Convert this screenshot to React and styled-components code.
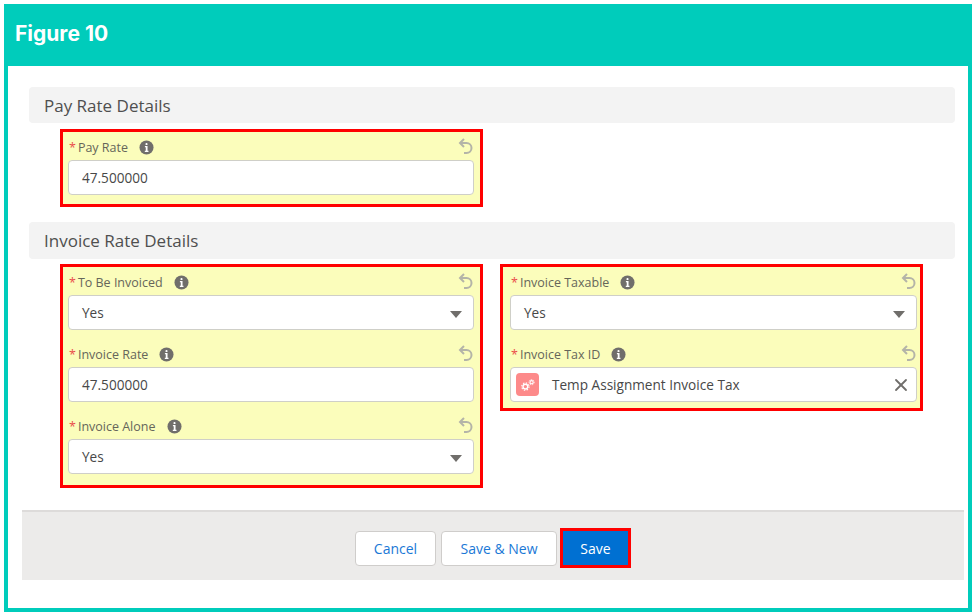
import React from 'react';
import styled, { createGlobalStyle } from 'styled-components';
import { X } from 'lucide-react';

const GlobalStyle = createGlobalStyle`
  html, body {
    margin: 0;
    padding: 0;
    background: #fff;
  }
  * {
    box-sizing: border-box;
  }
`;

function InfoIcon() {
  return (
    <InfoSvg viewBox="0 0 16 16">
      <circle cx="8" cy="8" r="7.5" fill="#706e6b" />
      <rect x="6.9" y="3.2" width="2.2" height="2.2" rx="1" fill="#fff" />
      <path d="M6.3 6.5h2.8v5h1v1.2H6.2v-1.2h1v-3.8h-.9z" fill="#fff" />
    </InfoSvg>
  );
}

function UndoIcon() {
  return (
    <svg width="16" height="16" viewBox="0 0 16 16" fill="none" stroke="currentColor" strokeWidth="2">
      <path d="M6 1L2 5l4 4" />
      <path d="M2 5h6.5a5 5 0 0 1 0 10H6" />
    </svg>
  );
}

function GearsIcon() {
  return (
    <svg width="14" height="12" viewBox="0 0 14 12">
      <circle cx="4.4" cy="7.6" r="2.4" fill="none" stroke="#fff" strokeWidth="1.4" />
      <circle cx="4.4" cy="7.6" r="3.7" fill="none" stroke="#fff" strokeWidth="1.1" strokeDasharray="1.5 1.4" />
      <circle cx="10.6" cy="3.2" r="1.6" fill="none" stroke="#fff" strokeWidth="1.1" />
      <circle cx="10.6" cy="3.2" r="2.6" fill="none" stroke="#fff" strokeWidth="0.9" strokeDasharray="1.2 1" />
    </svg>
  );
}

function Field({ label, children }) {
  return (
    <div>
      <LabelRow>
        <Required>*</Required>
        <LabelText>{label}</LabelText>
        <InfoIcon />
        <UndoButton>
          <UndoIcon />
        </UndoButton>
      </LabelRow>
      {children}
    </div>
  );
}

function Picklist({ value }) {
  return (
    <InputBox>
      {value}
      <Caret />
    </InputBox>
  );
}

export default function App() {
  return (
    <Frame>
      <GlobalStyle />
      <Header>Figure 10</Header>
      <Content>
        <SectionHead>Pay Rate Details</SectionHead>
        <FieldGrid>
          <RedBox $bottom={9}>
            <Field label="Pay Rate">
              <InputBox>47.500000</InputBox>
            </Field>
          </RedBox>
        </FieldGrid>

        <SectionHead $second>Invoice Rate Details</SectionHead>
        <FieldGrid>
          <RedBox $bottom={11}>
            <FieldStack>
              <Field label="To Be Invoiced">
                <Picklist value="Yes" />
              </Field>
              <Field label="Invoice Rate">
                <InputBox>47.500000</InputBox>
              </Field>
              <Field label="Invoice Alone">
                <Picklist value="Yes" />
              </Field>
            </FieldStack>
          </RedBox>
          <RedBox $bottom={6} $right>
            <FieldStack>
              <Field label="Invoice Taxable">
                <Picklist value="Yes" />
              </Field>
              <Field label="Invoice Tax ID">
                <InputBox $lookup>
                  <LookupIcon>
                    <GearsIcon />
                  </LookupIcon>
                  <LookupText>Temp Assignment Invoice Tax</LookupText>
                  <ClearButton>
                    <X size={20} strokeWidth={2.2} />
                  </ClearButton>
                </InputBox>
              </Field>
            </FieldStack>
          </RedBox>
        </FieldGrid>
      </Content>

      <Footer>
        <Button>Cancel</Button>
        <Button $wide>Save &amp; New</Button>
        <SaveOutline>
          <SaveButton>Save</SaveButton>
        </SaveOutline>
      </Footer>
    </Frame>
  );
}

const Frame = styled.div`
  width: 968px;
  height: 608px;
  margin: 4px;
  border: 4px solid #00ccbb;
  background: #fff;
  font-family: 'Open Sans', 'Noto Sans', sans-serif;
`;

const Header = styled.div`
  display: flex;
  align-items: center;
  height: 58px;
  padding: 0 0 8px 7px;
  background: #00ccbb;
  color: #fff;
  font-family: 'Inter', sans-serif;
  font-size: 21px;
  font-weight: 700;
`;

const Content = styled.div`
  padding: 21px 13px 0 21px;
`;

const SectionHead = styled.div`
  display: flex;
  align-items: center;
  height: ${props => (props.$second ? '37px' : '36px')};
  margin-top: ${props => (props.$second ? '15px' : '0')};
  margin-bottom: ${props => (props.$second ? '5px' : '6px')};
  padding-left: 15px;
  background: #f3f3f3;
  border-radius: 4px;
  color: #4f4f4f;
  font-size: 17px;
`;

const FieldGrid = styled.div`
  display: grid;
  grid-template-columns: 423px 423px;
  column-gap: 17px;
  align-items: start;
  padding-left: 31px;
`;

const RedBox = styled.div`
  padding: 0 ${props => (props.$right ? '3px' : '6px')} ${props => props.$bottom}px
    ${props => (props.$right ? '7px' : '5px')};
  background: #fbfdbb;
  border: 3px solid #ff0000;
`;

const FieldStack = styled.div`
  display: flex;
  flex-direction: column;
  gap: 9px;
`;

const LabelRow = styled.div`
  position: relative;
  display: flex;
  align-items: center;
  height: 28px;
  padding: 3px 0 0 1px;
  color: #66665a;
  font-size: 12.5px;
`;

const Required = styled.span`
  margin-right: 2px;
  color: #ea4a4a;
`;

const LabelText = styled.span`
  margin-right: 11px;
`;

const InfoSvg = styled.svg`
  width: 15px;
  height: 15px;
`;

const UndoButton = styled.span`
  position: absolute;
  top: 6px;
  right: 0;
  display: flex;
  color: #b4b4a8;
`;

const InputBox = styled.div`
  position: relative;
  display: flex;
  align-items: center;
  height: 35px;
  padding-left: ${props => (props.$lookup ? '5px' : '13px')};
  background: #fff;
  border: 1px solid #cfcfc8;
  border-radius: 4px;
  color: #484848;
  font-size: 13.6px;
`;

const Caret = styled.span`
  position: absolute;
  top: 15px;
  right: 11px;
  width: 0;
  height: 0;
  border-left: 6px solid transparent;
  border-right: 6px solid transparent;
  border-top: 7px solid #706e6b;
`;

const LookupIcon = styled.span`
  display: flex;
  align-items: center;
  justify-content: center;
  width: 23px;
  height: 23px;
  background: #fd8a8a;
  border-radius: 4px;
`;

const LookupText = styled.span`
  margin-left: 13px;
`;

const ClearButton = styled.span`
  position: absolute;
  top: 7px;
  right: 5px;
  display: flex;
  color: #706e6b;
`;

const Footer = styled.div`
  display: flex;
  align-items: center;
  justify-content: center;
  gap: 5px;
  height: 70px;
  margin: 22px 4px 0 14px;
  padding-top: 4px;
  background: #ecebea;
  border-top: 2px solid #dddbda;
`;

const Button = styled.button`
  width: ${props => (props.$wide ? '116px' : '81px')};
  height: 35px;
  padding: 0;
  background: #fff;
  border: 1px solid #cfcdcb;
  border-radius: 4px;
  color: #1a78d6;
  font-family: inherit;
  font-size: 14px;
`;

const SaveOutline = styled.div`
  margin-left: -2px;
  border: 3px solid #ff0000;
`;

const SaveButton = styled.button`
  display: block;
  width: 65px;
  height: 34px;
  padding: 0;
  background: #0070d2;
  border: none;
  color: #fff;
  font-family: inherit;
  font-size: 14px;
`;
